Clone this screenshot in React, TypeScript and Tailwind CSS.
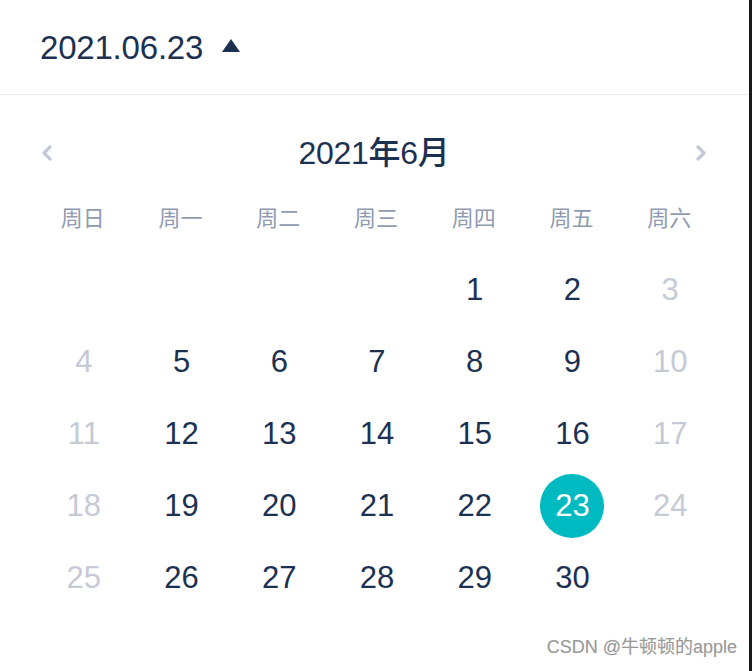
const weekdays = ["周日", "周一", "周二", "周三", "周四", "周五", "周六"];

type Day = { n: number; muted?: boolean } | null;

const weeks: Day[][] = [
  [null, null, null, null, { n: 1 }, { n: 2 }, { n: 3, muted: true }],
  [{ n: 4, muted: true }, { n: 5 }, { n: 6 }, { n: 7 }, { n: 8 }, { n: 9 }, { n: 10, muted: true }],
  [{ n: 11, muted: true }, { n: 12 }, { n: 13 }, { n: 14 }, { n: 15 }, { n: 16 }, { n: 17, muted: true }],
  [{ n: 18, muted: true }, { n: 19 }, { n: 20 }, { n: 21 }, { n: 22 }, { n: 23 }, { n: 24, muted: true }],
  [{ n: 25, muted: true }, { n: 26 }, { n: 27 }, { n: 28 }, { n: 29 }, { n: 30 }, null],
];

const selected = 23;

function Chevron({ dir }: { dir: "left" | "right" }) {
  return (
    <svg width="12" height="16" viewBox="0 0 12 16">
      <path
        d={dir === "left" ? "M9 2 L3 8 L9 14" : "M3 2 L9 8 L3 14"}
        fill="none"
        stroke="#c3c9d6"
        strokeWidth="3.2"
        strokeLinecap="round"
        strokeLinejoin="round"
      />
    </svg>
  );
}

export default function App() {
  return (
    <div
      className="relative flex h-[671px] w-[752px] overflow-hidden bg-white"
      style={{ fontFamily: '"Liberation Sans", "Noto Sans CJK SC", sans-serif' }}
    >
      <div className="flex min-w-0 flex-1 flex-col">
        <header className="flex h-[95px] shrink-0 items-center gap-[19px] border-b border-[#ededed] pl-[40px]">
          <span className="text-[33px] leading-none tracking-[-0.2px] text-[#1c3152]">2021.06.23</span>
          <svg width="18" height="13" viewBox="0 0 18 13" className="mt-[-4px]">
            <path d="M9 0 L18 13 L0 13 Z" fill="#1c3152" />
          </svg>
        </header>

        <div className="flex h-[116px] items-center justify-between pl-[41px] pr-[42px]">
          <Chevron dir="left" />
          <span className="text-[32px] font-medium tracking-[-0.3px] text-[#1c3152]">2021年6月</span>
          <Chevron dir="right" />
        </div>

        <div className="grid grid-cols-7 pl-[34px] pr-[31px]">
          {weekdays.map((w) => (
            <div key={w} className="flex h-[14px] items-center justify-center text-[22px] text-[#8f9bb1]">
              {w}
            </div>
          ))}
        </div>

        <div className="mt-[29px] flex flex-col pl-[35px] pr-[30px]">
          {weeks.map((week, i) => (
            <div key={i} className="grid h-[72px] grid-cols-7">
              {week.map((d, j) => (
                <div key={j} className="flex items-center justify-center">
                  {d &&
                    (d.n === selected ? (
                      <span className="flex h-[64px] w-[64px] items-center justify-center rounded-full bg-[#00bac2] text-[31px] text-white">
                        {d.n}
                      </span>
                    ) : (
                      <span
                        className={
                          d.muted ? "text-[31px] text-[#c5cad6]" : "text-[31px] text-[#1c3152]"
                        }
                      >
                        {d.n}
                      </span>
                    ))}
                </div>
              ))}
            </div>
          ))}
        </div>
      </div>
      <div className="w-[3px] shrink-0 bg-[#1a1a1a]" />

      <span className="absolute bottom-[10px] right-[15px] text-[18px] text-[#9a9a9a] [text-shadow:0_0_1px_#ddd]">
        CSDN @牛顿顿的apple
      </span>
    </div>
  );
}
